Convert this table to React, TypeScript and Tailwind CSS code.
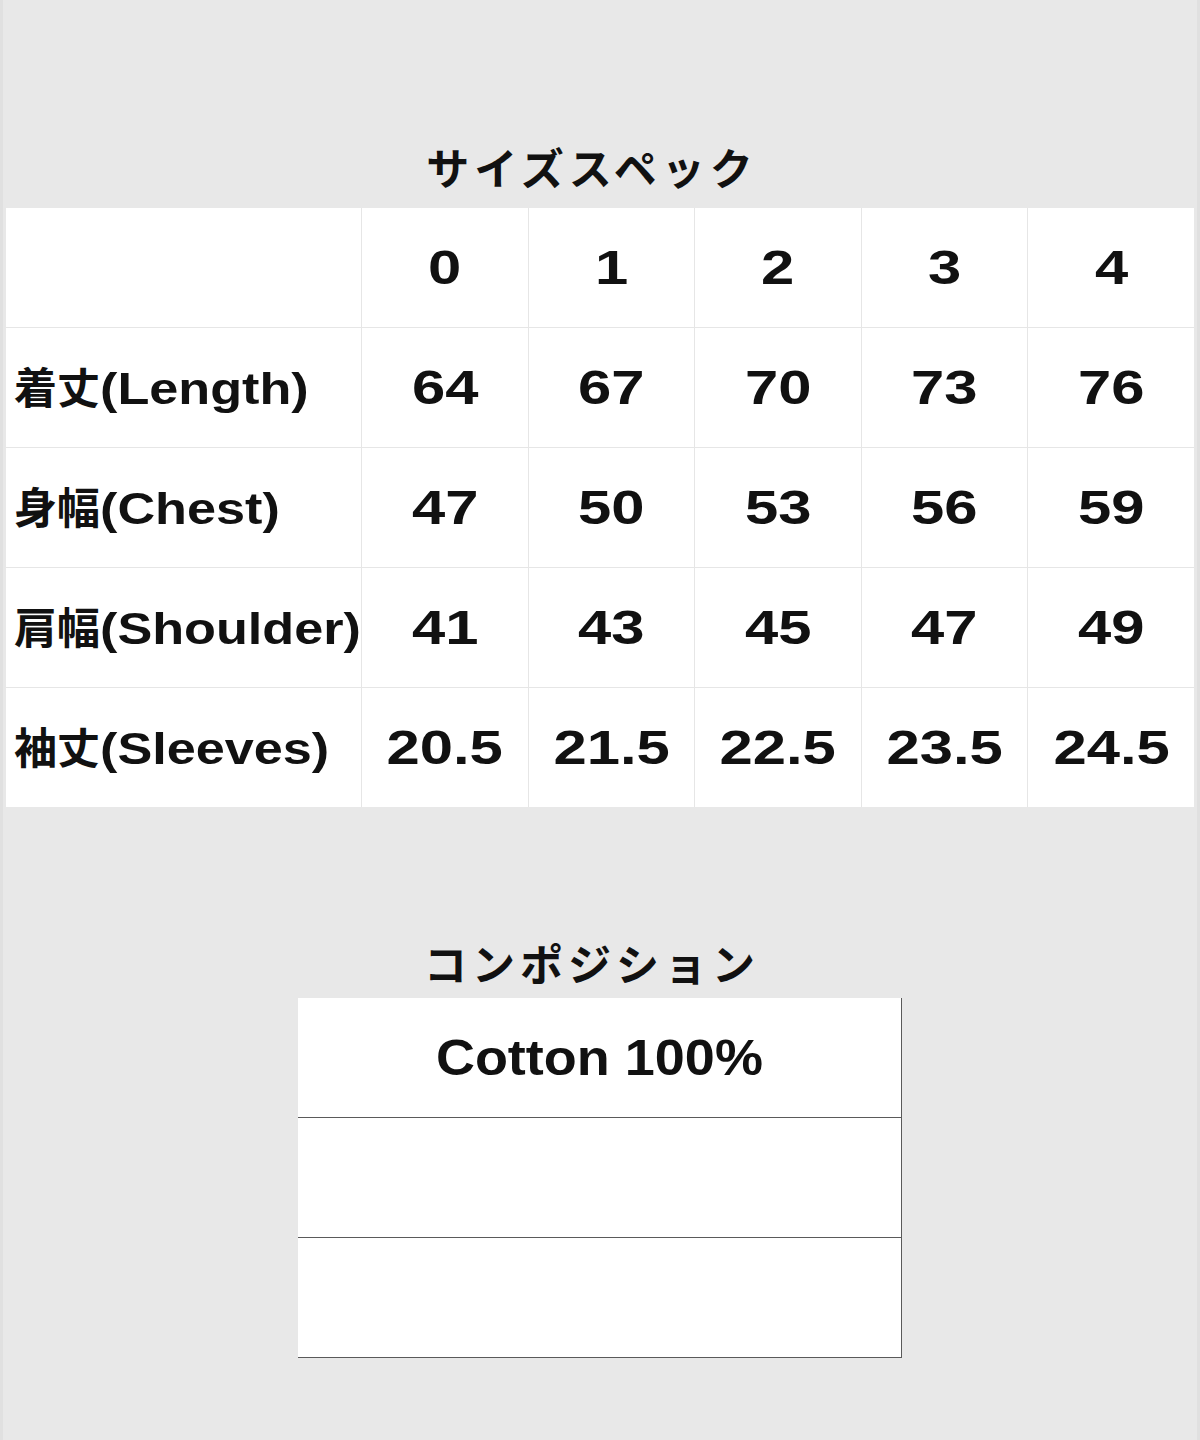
import React from "react";

const sizes = ["0", "1", "2", "3", "4"];

const rows = [
  { jp: "着丈", en: "(Length)", values: ["64", "67", "70", "73", "76"] },
  { jp: "身幅", en: "(Chest)", values: ["47", "50", "53", "56", "59"] },
  { jp: "肩幅", en: "(Shoulder)", values: ["41", "43", "45", "47", "49"] },
  { jp: "袖丈", en: "(Sleeves)", values: ["20.5", "21.5", "22.5", "23.5", "24.5"] },
];

const Heading = ({ children }: { children: React.ReactNode }) => (
  <h2 className="pr-[16px] text-center font-['Noto_Sans_CJK_JP',sans-serif] text-[43px] font-bold leading-[44px] tracking-[5px] text-[#111]">
    {children}
  </h2>
);

const Num = ({ v }: { v: string }) => (
  <div className="flex items-center justify-center bg-white">
    <span className="inline-block scale-x-[1.22] font-['Liberation_Sans',sans-serif] text-[49px] font-bold leading-none text-[#111]">
      {v}
    </span>
  </div>
);

export default function App() {
  return (
    <div className="min-h-[1440px] w-[1200px] border-x-[3px] border-[#e0e0e0] bg-[#e8e8e8] pt-[144px]">
      <Heading>サイズスペック</Heading>

      {/* size spec */}
      <div className="mx-auto mt-[20px] grid w-[1188px] auto-rows-[119px] grid-cols-[355px_repeat(5,minmax(0,1fr))] gap-px bg-[#e6e6e6]">
        <div className="bg-white" />
        {sizes.map((s) => (
          <Num key={s} v={s} />
        ))}
        {rows.map((r) => (
          <React.Fragment key={r.jp}>
            <div className="flex items-center bg-white pl-[8px] text-[#111]">
              <div className="flex items-baseline">
                <span className="font-['Noto_Sans_CJK_JP',sans-serif] text-[43px] font-bold leading-none">{r.jp}</span>
                <span className="inline-block origin-left scale-x-[1.16] font-['Liberation_Sans',sans-serif] text-[45px] font-bold leading-none">
                  {r.en}
                </span>
              </div>
            </div>
            {r.values.map((v, i) => (
              <Num key={i} v={v} />
            ))}
          </React.Fragment>
        ))}
      </div>

      <div className="mt-[133px]">
        <Heading>コンポジション</Heading>
      </div>

      {/* composition */}
      <div className="mx-auto mt-[14px] w-[604px] border-r border-b border-[#5a5a5a] bg-white">
        <div className="flex h-[120px] items-center justify-center border-b border-[#5a5a5a]">
          <span className="inline-block scale-x-[1.08] font-['Liberation_Sans',sans-serif] text-[50px] font-bold leading-none text-[#111]">
            Cotton 100%
          </span>
        </div>
        <div className="h-[120px] border-b border-[#5a5a5a]" />
        <div className="h-[119px]" />
      </div>
    </div>
  );
}
